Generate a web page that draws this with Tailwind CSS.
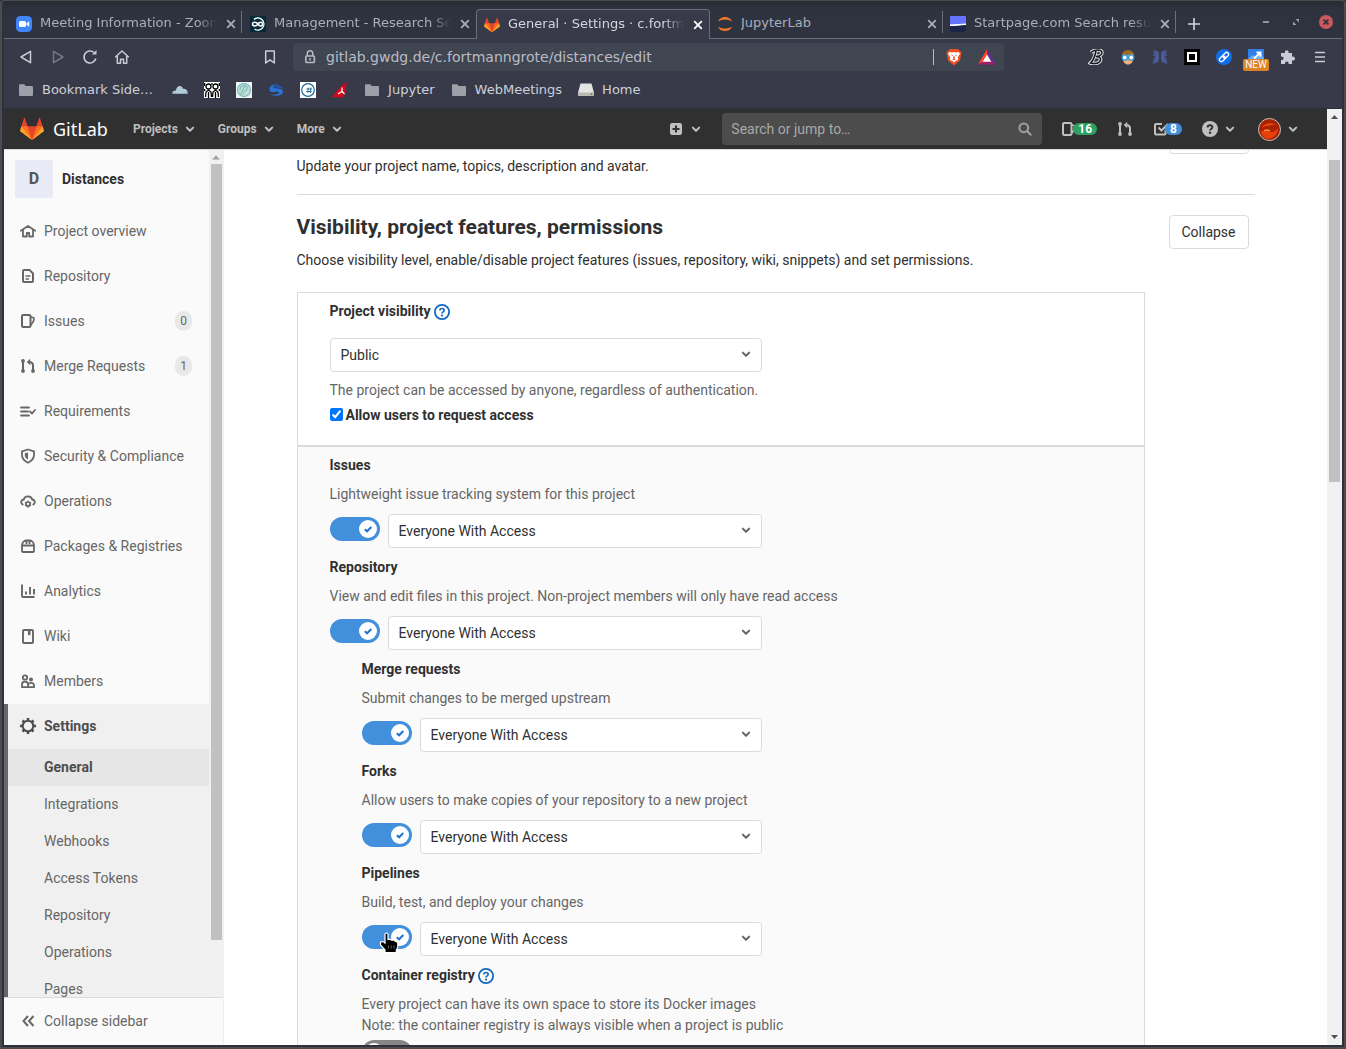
<!DOCTYPE html>
<html lang="en">
<head>
<meta charset="utf-8">
<title>General · Settings · GitLab</title>
<script src="https://cdn.jsdelivr.net/npm/@tailwindcss/browser@4"></script>
</head>
<body class="h-screen overflow-hidden bg-[#2d313d] font-['Roboto',sans-serif] text-sm text-[#303030]">
<svg class="hidden" aria-hidden="true">
  <symbol id="chevron" viewBox="0 0 16 16"><path d="M4.8 6.6 8 9.8l3.2-3.2" fill="none" stroke="currentColor" stroke-width="2" stroke-linecap="round" stroke-linejoin="round"/></symbol>
  <symbol id="close" viewBox="0 0 12 12"><path d="M2.2 2.2l7.6 7.6M9.800 2.200l-7.600 7.600" stroke="currentColor" stroke-width="1.8" fill="none"/></symbol>
  <symbol id="tanuki" viewBox="0 0 36 36">
    <path fill="#e24329" d="M2 14l9.38 9v-9l-4-12.28c-.205-.632-1.176-.632-1.38 0z"/>
    <path fill="#e24329" d="M34 14l-9.38 9v-9l4-12.28c.205-.632 1.176-.632 1.38 0z"/>
    <path fill="#e24329" d="M18 34.38 3 14h30z"/>
    <path fill="#fc6d26" d="M18 34.380 11.380 14H2l4 11z"/>
    <path fill="#fc6d26" d="M18 34.380 24.620 14H34l-4 11z"/>
    <path fill="#fca326" d="M2 14L.1 20.16c-.18.565 0 1.2.5 1.56l17.42 12.66z"/>
    <path fill="#fca326" d="M34 14l1.900 6.160c.18.565 0 1.200-.5 1.560L18 34.380z"/>
  </symbol>
  <symbol id="folder" viewBox="0 0 16 16"><path fill="#9da0a8" d="M1 3.500c0-.8.4-1.300 1.200-1.300h4l1.500 1.800h6c.8 0 1.300.5 1.300 1.300v7.400c0 .8-.5 1.300-1.300 1.300H2.300C1.500 14 1 13.500 1 12.700z"/></symbol>
  <symbol id="issues" viewBox="0 0 16 16"><rect x="2" y="2" width="8.500" height="12" rx="1.200" fill="none" stroke="currentColor" stroke-width="2"/><path d="M10.500 3.800l3.500 1.200-.4 3-3.100 4.400" fill="none" stroke="currentColor" stroke-width="1.700" stroke-linejoin="round"/></symbol>
  <symbol id="merge" viewBox="0 0 16 16"><g fill="none" stroke="currentColor" stroke-width="2"><path d="M3 3v10M13 13V7.500C13 5 11.500 4 9 4"/></g><g fill="currentColor"><circle cx="3" cy="3" r="1.900"/><circle cx="3" cy="13" r="1.900"/><circle cx="13" cy="13" r="1.900"/><path d="M10.200.800v6.400L6.800 4z"/></g></symbol>
  <symbol id="help" viewBox="0 0 16 16"><circle cx="8" cy="8" r="7.100" fill="none" stroke="currentColor" stroke-width="1.800"/><path d="M5.900 6.500C5.900 5.200 6.800 4.500 8 4.500s2.200.8 2.200 1.900C10.200 7.900 8 7.800 8 9.500" fill="none" stroke="currentColor" stroke-width="1.600"/><circle cx="8" cy="11.600" r="1.050" fill="currentColor"/></symbol>
  <symbol id="knob" viewBox="0 0 18 18"><circle cx="9" cy="9" r="9" fill="#fff"/><path d="M5.800 9.200l2.300 2.100 4.200-4.300" fill="none" stroke="#1f75cb" stroke-width="2"/></symbol>
</svg>

<div class="flex h-screen flex-col rounded-t border-2 border-t border-[#4b4c4b] bg-[#2d313d] px-0.5 pb-0.5">

  <!-- Browser tabs -->
  <div class="flex h-[38px] shrink-0 items-stretch bg-linear-to-b from-[#262b35] to-[#2f333f] to-25% font-['DejaVu_Sans',sans-serif] text-[13px] text-[#a9afbb]">
    <div class="flex min-w-0 flex-1 items-end">
      <div class="h-full w-1 border-b border-[#6b6f7a]"></div>
      <div class="flex h-full w-[234px] items-center gap-2 border-b border-[#6b6f7a] pt-2 pl-2">
        <svg class="size-4 shrink-0" viewBox="0 0 16 16"><rect width="16" height="16" rx="4.500" fill="#4087fc"/><rect x="3" y="5" width="7" height="6" rx="1.500" fill="#fff"/><path d="M10.500 7.300L13.200 5.300v5.400L10.500 8.700z" fill="#fff"/></svg>
        <a href="#" class="min-w-0 flex-1 overflow-hidden whitespace-nowrap [mask-image:linear-gradient(to_right,black_calc(100%_-_20px),transparent)]">Meeting Information - Zoom</a>
        <button class="-mr-1" aria-label="Close tab"><svg class="size-3"><use href="#close"/></svg></button>
        <span class="-mt-1 h-[22px] w-px bg-[#6b6f7a]"></span>
      </div>
      <div class="flex h-full w-[234px] items-center gap-2 border-b border-[#6b6f7a] pt-2 pr-[5px] pl-2">
        <svg class="size-4 shrink-0" viewBox="0 0 16 16"><rect width="16" height="16" fill="#022a3a"/><path d="M4 3.500A6 6 0 1 1 4.500 13" fill="none" stroke="#fff" stroke-width="1.400"/><path d="M8 8C6.500 5.500 2.500 5.500 2.500 8s4 2.500 5.500 0 4.500-2.500 4.500 0-3 2.500-4.500 0" fill="none" stroke="#fff" stroke-width="1.500"/></svg>
        <a href="#" class="min-w-0 flex-1 overflow-hidden whitespace-nowrap [mask-image:linear-gradient(to_right,black_calc(100%_-_20px),transparent)]">Management - Research Software</a>
        <button aria-label="Close tab"><svg class="size-3"><use href="#close"/></svg></button>
      </div>
      <div class="flex h-[30px] w-[234px] items-center gap-2 rounded-t border border-b-0 border-[#6b6f7a] bg-[#383a4a] pr-[5px] pl-[7px] text-[#d3d6de]">
        <svg class="size-4 shrink-0"><use href="#tanuki"/></svg>
        <a href="#" class="min-w-0 flex-1 overflow-hidden whitespace-nowrap [mask-image:linear-gradient(to_right,black_calc(100%_-_20px),transparent)]">General · Settings · c.fortmanngrote</a>
        <button class="text-white" aria-label="Close tab"><svg class="size-3"><use href="#close"/></svg></button>
      </div>
      <div class="flex h-full w-[233px] items-center gap-2 border-b border-[#6b6f7a] pt-2 pl-[7px]">
        <svg class="size-4 shrink-0" viewBox="0 0 16 16"><path d="M1 5.500C3-.5 13-.5 15 5.500 11 2.800 5 2.800 1 5.500zM1 10.500c2 6 12 6 14 0-4 2.700-10 2.700-14 0z" fill="#f37726"/></svg>
        <a href="#" class="min-w-0 flex-1 overflow-hidden whitespace-nowrap">JupyterLab</a>
        <button class="-mr-1" aria-label="Close tab"><svg class="size-3"><use href="#close"/></svg></button>
        <span class="-mt-1 h-[22px] w-px bg-[#6b6f7a]"></span>
      </div>
      <div class="flex h-full w-[233px] items-center gap-2 border-b border-[#6b6f7a] pt-2 pl-[7px]">
        <svg class="size-4 shrink-0" viewBox="0 0 16 16"><rect width="16" height="16" rx="1" fill="#6573ff"/><path d="M0 8.500L16 7.500V10H0z" fill="#fff"/><path d="M0 10c6 0 10-.5 16-1v6q0 1-1 1H1q-1 0-1-1z" fill="#1c2447"/></svg>
        <a href="#" class="min-w-0 flex-1 overflow-hidden whitespace-nowrap [mask-image:linear-gradient(to_right,black_calc(100%_-_20px),transparent)]">Startpage.com Search results</a>
        <button class="-mr-1" aria-label="Close tab"><svg class="size-3"><use href="#close"/></svg></button>
        <span class="-mt-1 h-[22px] w-px bg-[#6b6f7a]"></span>
      </div>
      <div class="flex h-full flex-1 items-center border-b border-[#6b6f7a] pt-2 pl-3">
        <button aria-label="New tab" class="text-[#d3d6de]"><svg class="size-3" viewBox="0 0 12 12"><path d="M6 0v12M0 6h12" stroke="currentColor" stroke-width="1.600"/></svg></button>
      </div>
    </div>
    <div class="flex items-center gap-4 border-b border-[#6b6f7a] pt-1 pr-[9px]">
      <button aria-label="Minimize"><svg class="size-3.5" viewBox="0 0 14 14"><path d="M4 7h6" stroke="#9a9fa9" stroke-width="1.800"/></svg></button>
      <button aria-label="Restore"><svg class="size-3.5" viewBox="0 0 14 14"><path d="M6.500 4H10v3.500zM4 6.500V10h3.500z" fill="#9a9fa9"/></svg></button>
      <button aria-label="Close window"><svg class="size-3.5" viewBox="0 0 14 14"><circle cx="7" cy="7" r="7" fill="#cc575d"/><path d="M4.600 4.600l4.800 4.800M9.400 4.600L4.600 9.400" stroke="#2f333f" stroke-width="1.800"/></svg></button>
    </div>
  </div>

  <!-- Address bar -->
  <div class="flex h-[35px] shrink-0 items-center bg-[#383a4a] px-1.5 font-['DejaVu_Sans',sans-serif] text-[#c9ccd4]">
    <div class="flex">
      <button class="grid h-8 w-8 place-items-center" aria-label="Back"><svg class="size-4" viewBox="0 0 16 16"><path d="M12.500 2.300v11.400L3 8z" fill="none" stroke="currentColor" stroke-width="1.500" stroke-linejoin="round"/></svg></button>
      <button class="grid h-8 w-8 place-items-center text-[#747783]" aria-label="Forward"><svg class="size-4" viewBox="0 0 16 16"><path d="M3.500 2.300v11.400L13 8z" fill="none" stroke="currentColor" stroke-width="1.500" stroke-linejoin="round"/></svg></button>
      <button class="grid h-8 w-8 place-items-center" aria-label="Reload"><svg class="size-4" viewBox="0 0 16 16"><path d="M13.800 9.500A6 6 0 1 1 12 3.500" fill="none" stroke="currentColor" stroke-width="1.600"/><path d="M10 5.500h4.500V1z" fill="currentColor"/></svg></button>
      <button class="grid h-8 w-8 place-items-center" aria-label="Home"><svg class="size-4" viewBox="0 0 16 16"><path d="M1.200 8.200L8 2l6.800 6.200M3.300 7v7.200h3.200v-4h3v4h3.200V7" fill="none" stroke="currentColor" stroke-width="1.500" stroke-linejoin="round"/></svg></button>
    </div>
    <button class="mr-[7px] ml-[116px] grid h-8 w-8 place-items-center" aria-label="Bookmark"><svg class="size-4" viewBox="0 0 16 16"><path d="M3.700 2h8.600v12L8 10.800 3.700 14z" fill="none" stroke="currentColor" stroke-width="1.500" stroke-linejoin="round"/></svg></button>
    <div class="flex h-7 min-w-0 flex-1 items-center rounded bg-[#404552] pr-2 pl-[9px]">
      <svg class="size-4 shrink-0" viewBox="0 0 16 16"><rect x="3.800" y="7" width="8.600" height="6.500" rx="1" fill="none" stroke="#b9bcc4" stroke-width="1.600"/><path d="M5.300 7V4.500a2.700 2.700 0 0 1 5.500 0V7M8 9v2.500" fill="none" stroke="#b9bcc4" stroke-width="1.500"/></svg>
      <input aria-label="Address" class="ml-2 min-w-0 flex-1 bg-transparent text-sm text-[#b9bcc4] outline-none" value="gitlab.gwdg.de/c.fortmanngrote/distances/edit">
      <span class="h-4 w-px bg-[#b9bcc4]"></span>
      <button class="ml-3 grid h-5 w-4 place-items-center" aria-label="Shields"><svg class="h-[18px] w-4" viewBox="0 0 16 18"><path d="M4 1h8l2 2 1.500 1-.5 3-1 5.500L8 17.500 2 12.500 1 7 .500 4 2 3z" fill="#f1501f"/><path d="M3 4l3 .6L8 4l2 .6L13 4l.8 2-2 3.500.2 2.500-2.500 1L8 14.500 6.500 13 4 12l.2-2.500L2.200 6z" fill="#fff"/><path d="M4.500 6.500L7 7.300 6.500 8zM11.500 6.500L9 7.300l.5.7zM7 8.500h2L8.600 11 10 12H6l1.400-1z" fill="#f1501f"/></svg></button>
      <button class="ml-4 grid h-5 w-[18px] place-items-center" aria-label="Rewards"><svg class="h-4 w-[18px]" viewBox="0 0 18 16"><path d="M9 0L0 15.500h18z" fill="#662d91"/><path d="M9 0L0 15.500 9 11z" fill="#ff4724"/><path d="M0 15.500h18L9 10z" fill="#9e1f63"/><path d="M9 5.500l4.300 7.200H4.700z" fill="#fff"/></svg></button>
    </div>
    <div class="ml-[76px] flex">
      <button class="grid h-8 w-8 place-items-center" aria-label="Bibliography"><svg class="size-4" viewBox="0 0 16 16"><path d="M3 3.500C6 .500 14 0 14 3.500 14 6 10.500 7.300 8 7.500c3 0 5 1 4.500 3.500C12 14 7 15.500 2.500 14c2.500-2 4.500-7 5.500-12" fill="none" stroke="#d9dbe2" stroke-width="3.600"/><path d="M3 3.500C6 .500 14 0 14 3.500 14 6 10.500 7.300 8 7.500c3 0 5 1 4.500 3.500C12 14 7 15.500 2.500 14c2.500-2 4.500-7 5.500-12" fill="none" stroke="#16171c" stroke-width="1.500"/></svg></button>
      <button class="grid h-8 w-8 place-items-center" aria-label="Reader"><svg class="size-4" viewBox="0 0 16 16"><path d="M2 8C1 4 4 1 8 1s7 3 6 7l-2 6H4z" fill="#9b6a24"/><path d="M3 7l10-2v5c0 3-2 5.500-5 5.500S3 13 3 10z" fill="#f0b078"/><circle cx="4.800" cy="8.500" r="2.600" fill="#fff" stroke="#2f97e0" stroke-width="1.400"/><circle cx="11.200" cy="8.500" r="2.600" fill="#fff" stroke="#2f97e0" stroke-width="1.400"/></svg></button>
      <button class="grid h-8 w-8 place-items-center" aria-label="Butterfly"><svg class="size-4" viewBox="0 0 16 16"><path d="M.5 1L5 2c1.500.5 2 2 2 4v4c0 2-.5 3-2 3.500L.500 15l1-2.500L.500 12 3 10 .500 9.500 4 8 0 6h3L.500 4H3zM15.500 1L11 2c-1.500.5-2 2-2 4v4c0 2 .5 3 2 3.500l4.500 1.500-1-2.500 1-.5L13 10l2.500-.5L12 8l4-2h-3l2.500-2H13z" fill="#4a5c96"/></svg></button>
      <button class="grid h-8 w-8 place-items-center" aria-label="Frame"><svg class="size-4" viewBox="0 0 16 16"><rect width="16" height="16" fill="#000"/><rect x="4" y="4" width="8" height="8" fill="none" stroke="#fff" stroke-width="2"/></svg></button>
      <button class="grid h-8 w-8 place-items-center" aria-label="Copy link"><svg class="size-4" viewBox="0 0 16 16"><circle cx="8" cy="8" r="8" fill="#0f6fe8"/><g fill="none" stroke="#fff" stroke-width="1.300" transform="rotate(-45 8 8)"><rect x="2.300" y="6" width="6.500" height="4" rx="2"/><rect x="7.200" y="6" width="6.500" height="4" rx="2"/></g></svg></button>
      <button class="relative grid h-8 w-8 place-items-center" aria-label="Open in new window"><svg class="size-4" viewBox="0 0 16 16"><rect width="16" height="14" fill="#2f80e8"/><path d="M0 10l5-4 3 3 4-4 4 4v5H0z" fill="#6fb0fa"/><path d="M6 9.500l6-5.500M8.500 3.500h4v4" stroke="#fff" stroke-width="2" fill="none"/></svg><span class="absolute top-[18px] left-[3px] h-3 w-[26px] rounded-xs bg-[#db8325] text-center font-['Roboto'] text-[10px] leading-3 text-white">NEW</span></button>
      <button class="grid h-8 w-8 place-items-center" aria-label="Extensions"><svg class="size-4" viewBox="0 0 16 16"><path d="M1 4h4C4 .300 9.500.300 8.500 4H12v3.500c4-1 4 5 0 4V15H8.500c1-3.500-4-3.500-3.500 0H1v-4c3.500.5 3.500-4 0-3.500z" fill="#c9ccd4"/></svg></button>
      <button class="grid h-8 w-8 place-items-center" aria-label="Menu"><svg class="size-4" viewBox="0 0 16 16"><path d="M3 3.500h10M3 8h10M3 12.500h10" stroke="currentColor" stroke-width="1.500"/></svg></button>
    </div>
  </div>

  <!-- Bookmarks bar -->
  <div class="flex h-[34px] shrink-0 items-center gap-4 bg-[#383a4a] px-3.5 pb-0.5 font-['DejaVu_Sans',sans-serif] text-[13px] text-[#cdd0d8]">
    <a href="#" class="flex items-center gap-2 pr-[3px]"><svg class="size-4"><use href="#folder"/></svg>Bookmark Side…</a>
    <a href="#" aria-label="Cloud"><svg class="size-4" viewBox="0 0 16 16"><path d="M1 12C-1 10 2 8 4 8.500 4 4 10 2 11 7c3-1 6 3 4 5z" fill="#b4cad6"/><path d="M1 12h14.500c.5-1 .3-1.500 0-2C11 11.500 5 11.500.500 10.500z" fill="#8fa9b8"/></svg></a>
    <a href="#" aria-label="Figures"><svg class="size-4" viewBox="0 0 16 16"><rect width="16" height="16" fill="#fff"/><g fill="none" stroke="#000" stroke-width="1.300"><circle cx="4.500" cy="4.500" r="2.500"/><circle cx="11.500" cy="4.500" r="2.500"/><path d="M.7 1v3M15.300 1v3M8 1v2M1.500 15l.5-5 2.500-2L7 10l.5 5M8.500 15l.5-5 2.500-2 2.500 2 .5 5M4.500 10v6M11.500 10v6M.7 7v2M15.300 7v2"/></g></svg></a>
    <a href="#" aria-label="Institute"><svg class="size-4" viewBox="0 0 16 16"><rect width="16" height="16" fill="#eef6f5"/><circle cx="8" cy="8" r="6.800" fill="#c3dfdc"/><g fill="none" stroke="#79b9b3" stroke-width="1.100"><circle cx="8" cy="8" r="6.500"/><path d="M5 13C4 8 8 9 8 5c2-2 4 0 3 2S7 9 7 13M4 8c0-3 2-5 5-5"/></g></svg></a>
    <a href="#" aria-label="Globe"><svg class="size-4" viewBox="0 0 16 16"><path d="M2 9.500C0 4.500 5 1 10.500 2.500 7.500 2.500 5 3.500 5 5c0 2 10 .5 10 4.500 0 5-9 5.500-13 2.500 4 1.500 9 .5 9-1.500C11 8.500 4 11 2 9.500z" fill="#2a72d4"/><path d="M9 3.200c4-.2 6 2 6 4.300C13 5.500 9 6 6 5.500c0-1 1-2 3-2.300z" fill="#1e56b0"/></svg></a>
    <a href="#" aria-label="Hash"><svg class="size-4" viewBox="0 0 16 16"><rect width="16" height="16" fill="#fff"/><circle cx="8" cy="8" r="6.300" fill="none" stroke="#20699c" stroke-width="1.200"/><path d="M8.300 5.500l-.6 5.500M10.900 5.500l-.6 5.500M6.500 7h5.500M6.200 9.500h5.500" stroke="#20699c" stroke-width=".9"/></svg></a>
    <a href="#" aria-label="Sail"><svg class="size-4" viewBox="0 0 16 16"><path d="M15.500 0C9 3 5 9 0 15l11 .5c3-3.500 2-10 4.500-15.500z" fill="#d3061c"/><path d="M10 5.500v4L6 12M10 9.500l2.500 2.500" stroke="#fff" stroke-width="1.300" fill="none"/></svg></a>
    <a href="#" class="flex items-center gap-2"><svg class="size-4"><use href="#folder"/></svg>Jupyter</a>
    <a href="#" class="flex items-center gap-2"><svg class="size-4"><use href="#folder"/></svg>WebMeetings</a>
    <a href="#" class="flex items-center gap-2"><svg class="size-4" viewBox="0 0 16 16"><path d="M2.500 1.500h11L15.800 10v3q0 1-1 1H1.200q-1 0-1-1v-3z" fill="#e4e4e2"/><path d="M.200 10.500h15.600V13q0 1-1 1H1.200q-1 0-1-1z" fill="#b9b9b6"/><circle cx="13.500" cy="12.200" r=".9" fill="#4d9a1c"/></svg>Home</a>
  </div>

  <!-- Page -->
  <div class="flex min-h-0 flex-1 border-t border-[#2d313d] bg-white">
    <div class="flex min-w-0 flex-1 flex-col">
      <header class="flex h-[41px] shrink-0 items-center border-b border-[#dbdbdb] bg-[#303030] pr-[26px] pl-4 text-[#bfbfbf]">
        <a href="#" class="flex w-[113px] items-center gap-[9px] font-['Noto_Sans',sans-serif] text-lg text-white"><svg class="size-6"><use href="#tanuki"/></svg>GitLab</a>
        <nav class="flex gap-5 text-xs font-bold">
          <button class="flex items-center gap-1">Projects<svg class="size-4"><use href="#chevron"/></svg></button>
          <button class="flex items-center gap-1">Groups<svg class="size-4"><use href="#chevron"/></svg></button>
          <button class="flex items-center gap-1">More<svg class="size-4"><use href="#chevron"/></svg></button>
        </nav>
        <button class="ml-auto flex items-center gap-1" aria-label="New"><svg class="size-4" viewBox="0 0 16 16"><rect x="2" y="2" width="12" height="12" rx="2" fill="currentColor"/><path d="M8 4.500v7M4.500 8h7" stroke="#303030" stroke-width="2"/></svg><svg class="size-4"><use href="#chevron"/></svg></button>
        <div class="mr-[19px] ml-[18px] flex h-8 w-80 items-center rounded bg-[#4c4c4c] px-[9px]">
          <input type="search" aria-label="Search" placeholder="Search or jump to…" class="min-w-0 flex-1 bg-transparent outline-none placeholder:text-[#a8a8a8]">
          <svg class="size-4" viewBox="0 0 16 16"><circle cx="6.800" cy="6.800" r="4.400" fill="none" stroke="#a0a0a0" stroke-width="2"/><path d="M10.200 10.200l3.500 3.500" stroke="#a0a0a0" stroke-width="2" stroke-linecap="round"/></svg>
        </div>
        <div class="flex items-center gap-5">
          <a href="#" class="flex items-center" aria-label="Issues"><svg class="size-4"><use href="#issues"/></svg><span class="-ml-1 rounded-full bg-[#2da160] px-[5px] text-xs leading-3 font-bold text-white">16</span></a>
          <a href="#" aria-label="Merge requests"><svg class="size-4"><use href="#merge"/></svg></a>
          <a href="#" class="flex items-center" aria-label="To-Do List"><svg class="size-4" viewBox="0 0 16 16"><path d="M9 3H3q-1 0-1 1v8.500q0 1 1 1h8.500q1 0 1-1V9M5.500 6.500l3 3L15 3" fill="none" stroke="currentColor" stroke-width="2"/></svg><span class="-ml-1 rounded-full bg-[#428fdc] px-[5px] text-xs leading-3 font-bold text-white">8</span></a>
          <button class="flex items-center gap-1" aria-label="Help"><svg class="size-4" viewBox="0 0 16 16"><circle cx="8" cy="8" r="8" fill="currentColor"/><path d="M5.600 6.500C5.600 5.200 6.600 4.300 8 4.300s2.400.8 2.400 2C10.400 8 8 8 8 9.600" fill="none" stroke="#303030" stroke-width="1.900"/><circle cx="8" cy="11.800" r="1.200" fill="#303030"/></svg><svg class="size-4"><use href="#chevron"/></svg></button>
          <button class="flex items-center gap-1" aria-label="Account"><svg class="size-[23px]" viewBox="0 0 23 23"><circle cx="11.500" cy="11.500" r="11" fill="#a82204" stroke="#c9c0bb"/><path d="M4 9c3-4 10-5 14-2-4-1-6 1-9 1S6 9 4 9z" fill="#f0440b"/><path d="M3 14c4-3 8-1 10 0s5-2 7-4c0 6-4 10.500-9 10.500S3.500 18 3 14z" fill="#e8400a"/><path d="M6 13q3-2 6 0" stroke="#ff8a3c" stroke-width="1.500" fill="none"/></svg><svg class="size-4"><use href="#chevron"/></svg></button>
        </div>
      </header>

      <div class="flex min-h-0 flex-1">
        <!-- Sidebar -->
        <aside class="flex w-[220px] shrink-0 flex-col border-r border-[#f0f0f0] bg-[#fafafa] text-[#666]">
          <div class="flex min-h-0 flex-1 overflow-hidden">
            <nav class="min-w-0 flex-1" aria-label="Project">
              <a href="#" class="flex h-[59px] items-center gap-[9px] pb-px pl-[11px] font-bold text-[#303030]"><span class="grid size-[38px] place-items-center rounded-xs bg-[#e8eaf6] text-base text-[#555]">D</span>Distances</a>
              <a href="#" class="flex h-[45px] items-center gap-2 px-4 pb-px"><svg class="size-4" viewBox="0 0 16 16"><path d="M.800 7.700L8 3l7.200 4.700M3 7v6.500h3.800V10h2.400v3.500H13V7" fill="none" stroke="currentColor" stroke-width="1.800" stroke-linejoin="round" stroke-linecap="round"/></svg>Project overview</a>
              <a href="#" class="flex h-[45px] items-center gap-2 px-4 pb-px"><svg class="size-4" viewBox="0 0 16 16"><path d="M3 3q0-1 1-1h5.500L13 5.500V13q0 1-1 1H4q-1 0-1-1z" fill="none" stroke="currentColor" stroke-width="2"/><path d="M5.500 8h5M5.500 11H9" stroke="currentColor" stroke-width="1.600"/></svg>Repository</a>
              <a href="#" class="flex h-[45px] items-center gap-2 pr-[17px] pb-px pl-4"><svg class="size-4"><use href="#issues"/></svg><span class="flex-1">Issues</span><span class="h-5 rounded-full bg-[#e8e8e8] px-[5px] text-xs leading-5">0</span></a>
              <a href="#" class="flex h-[45px] items-center gap-2 pr-[17px] pb-px pl-4"><svg class="size-4"><use href="#merge"/></svg><span class="flex-1">Merge Requests</span><span class="h-5 rounded-full bg-[#e8e8e8] px-[5px] text-xs leading-5">1</span></a>
              <a href="#" class="flex h-[45px] items-center gap-2 px-4 pb-px"><svg class="size-4" viewBox="0 0 16 16"><path d="M1 4.500h8M1 8.500h7M1 12.500h8M10 8.500l2 2 3-3.500" fill="none" stroke="currentColor" stroke-width="1.800" stroke-linecap="round"/></svg>Requirements</a>
              <a href="#" class="flex h-[45px] items-center gap-2 px-4 pb-px"><svg class="size-4" viewBox="0 0 16 16"><path d="M8 1.500l6 1.800V7c0 3.500-2.500 6-6 7.700C4.500 13 2 10.500 2 7V3.300z" fill="none" stroke="currentColor" stroke-width="1.800" stroke-linejoin="round"/><path d="M8 4.500v7C6 10.500 4.800 9 4.800 7V5.200z" fill="currentColor"/></svg>Security &amp; Compliance</a>
              <a href="#" class="flex h-[45px] items-center gap-2 px-4 pb-px"><svg class="size-4" viewBox="0 0 16 16"><path d="M2.700 11.500C.300 10 .800 6.800 3.800 6.500c.8-4.300 7.500-4.300 8.400 0 3 .3 3.500 3.500 1.100 5" fill="none" stroke="currentColor" stroke-width="1.800" stroke-linecap="round"/><circle cx="8" cy="11" r="2" fill="none" stroke="currentColor" stroke-width="1.700"/><path d="M8 7.500v1.200M8 13.300v1.500M5 9.300l1 .6M11 9.300l-1 .6M5 12.700l1-.6M11 12.700l-1-.6" stroke="currentColor" stroke-width="1.500"/></svg>Operations</a>
              <a href="#" class="flex h-[45px] items-center gap-2 px-4 pb-px"><svg class="size-4" viewBox="0 0 16 16"><path d="M2 7.500h12V13q0 1-1 1H3q-1 0-1-1zM2 7.500C2 5 4 2.500 6 2.500h4c2 0 4 2.500 4 5M6.500 3v3M9.500 3v3" fill="none" stroke="currentColor" stroke-width="1.800"/></svg>Packages &amp; Registries</a>
              <a href="#" class="flex h-[45px] items-center gap-2 px-4 pb-px"><svg class="size-4" viewBox="0 0 16 16"><path d="M2 1.500V13q0 1 1 1h11.500M6 8.500v3M10 4v7.500M14 6v5.500" fill="none" stroke="currentColor" stroke-width="1.900"/></svg>Analytics</a>
              <a href="#" class="flex h-[45px] items-center gap-2 px-4 pb-px"><svg class="size-4" viewBox="0 0 16 16"><rect x="3" y="2" width="10" height="13" rx="1" fill="none" stroke="currentColor" stroke-width="1.900"/><path d="M8 2v5.500L9.200 6.700l1.300.8V2z" fill="currentColor"/></svg>Wiki</a>
              <a href="#" class="flex h-[45px] items-center gap-2 px-4 pb-px"><svg class="size-4" viewBox="0 0 16 16"><g fill="none" stroke="currentColor" stroke-width="1.800"><circle cx="5" cy="4.500" r="2.200"/><path d="M2 14.200v-3q0-2.500 3-2.500t3 2.500v3zM8 14.200h6v-1.500c0-3.500-4.500-3.500-5-1.500"/></g><circle cx="11" cy="6.500" r="2" fill="currentColor"/></svg>Members</a>
              <div class="border-l-4 border-[#666] bg-[#f0f0f0]">
                <a href="#" class="flex h-[45px] items-center gap-2 px-3 pb-px font-bold text-[#4d4d4d]"><svg class="size-4" viewBox="0 0 16 16"><circle cx="8" cy="8" r="5.300" fill="none" stroke="currentColor" stroke-width="2"/><path d="M8 0v2.500M8 13.500V16M0 8h2.500M13.500 8H16M2.500 2.500l2 2M11.500 11.500l2 2M13.500 2.500l-2 2M4.500 11.500l-2 2" stroke="currentColor" stroke-width="2.500"/></svg>Settings</a>
                <a href="#" class="flex h-[37px] items-center bg-[#e6e6e6] pb-px pl-9 font-bold text-[#4d4d4d]">General</a>
                <a href="#" class="flex h-[37px] items-center pb-px pl-9">Integrations</a>
                <a href="#" class="flex h-[37px] items-center pb-px pl-9">Webhooks</a>
                <a href="#" class="flex h-[37px] items-center pb-px pl-9">Access Tokens</a>
                <a href="#" class="flex h-[37px] items-center pb-px pl-9">Repository</a>
                <a href="#" class="flex h-[37px] items-center pb-px pl-9">Operations</a>
                <a href="#" class="flex h-[37px] items-center pb-px pl-9">Pages</a>
              </div>
            </nav>
            <div class="flex w-3.5 flex-col items-center bg-[#f1f1f1] pt-1">
              <svg class="h-2.5 w-2 shrink-0" viewBox="0 0 8 10"><path d="M0 5.500h8l-4-4z" fill="#a0a0a0"/></svg>
              <div class="h-[92%] w-[11px] bg-[#c1c1c1]"></div>
            </div>
          </div>
          <button class="flex h-12 shrink-0 items-center gap-2 border-t border-[#dbdbdb] px-4 pb-px"><svg class="size-4" viewBox="0 0 16 16"><path d="M8 3L3.500 8 8 13M13.500 3L9 8l4.500 5" fill="none" stroke="currentColor" stroke-width="2"/></svg>Collapse sidebar</button>
        </aside>

        <!-- Settings -->
        <main class="min-w-0 flex-1 overflow-hidden">
          <div class="mx-auto -mt-[30px] w-full max-w-[990px] px-4 leading-[21px]">
            <section class="border-b border-[#dbdbdb] pb-[17px]">
              <div class="flex justify-end pr-1.5"><button aria-label="Expand" class="h-[34px] w-20 rounded border border-[#dbdbdb]"></button></div>
              <p class="mt-0.5">Update your project name, topics, description and avatar.</p>
            </section>
            <section class="pt-5">
              <div class="flex items-start justify-between pr-1.5">
                <div>
                  <h2 class="text-[21px] leading-6 font-bold">Visibility, project features, permissions</h2>
                  <p class="mt-[11px]">Choose visibility level, enable/disable project features (issues, repository, wiki, snippets) and set permissions.</p>
                </div>
                <button class="h-[34px] w-20 shrink-0 rounded border border-[#dbdbdb]">Collapse</button>
              </div>
              <div class="mt-[21px] mr-[110px] border border-[#dbdbdb]">
                <div class="px-8 pt-2 pb-[19px]">
                  <div class="flex items-center gap-[3px]"><label for="visibility" class="font-bold">Project visibility</label><a href="#" aria-label="Visibility help" class="text-[#1068bf]"><svg class="size-4"><use href="#help"/></svg></a></div>
                  <div class="relative mt-4 w-[432px] max-w-full">
                    <select id="visibility" class="h-[34px] w-full appearance-none rounded border border-[#dbdbdb] bg-white px-2.5"><option>Public</option></select>
                    <svg class="pointer-events-none absolute top-2 right-2 size-4 text-[#666]"><use href="#chevron"/></svg>
                  </div>
                  <p class="mt-2 text-[#666]">The project can be accessed by anyone, regardless of authentication.</p>
                  <label class="mt-1 flex items-center gap-[3px] font-bold"><input type="checkbox" checked class="mb-0.5 size-[13px] accent-[#0075ff]">Allow users to request access</label>
                </div>
                <div class="flex flex-col gap-[9px] border-t-2 border-[#dbdbdb] bg-[#fafafa] px-8 pt-2 pb-8">
                  <div>
                    <h3 class="font-bold">Issues</h3>
                    <p class="mt-2 text-[#666]">Lightweight issue tracking system for this project</p>
                    <div class="mt-[9px] flex w-[432px] max-w-full items-start gap-2">
                      <label class="relative mt-[3px] h-6 w-[50px] shrink-0"><input type="checkbox" role="switch" checked aria-label="Issues" class="h-6 w-[50px] appearance-none rounded-full bg-[#428fdc]"><svg class="pointer-events-none absolute top-[3px] right-[3px] size-[18px]"><use href="#knob"/></svg></label>
                      <div class="relative flex-1"><select aria-label="Issues access" class="h-[34px] w-full appearance-none rounded border border-[#dbdbdb] bg-white px-2.5"><option>Everyone With Access</option></select><svg class="pointer-events-none absolute top-2 right-2 size-4 text-[#666]"><use href="#chevron"/></svg></div>
                    </div>
                  </div>
                  <div>
                    <h3 class="font-bold">Repository</h3>
                    <p class="mt-2 text-[#666]">View and edit files in this project. Non-project members will only have read access</p>
                    <div class="mt-[9px] flex w-[432px] max-w-full items-start gap-2">
                      <label class="relative mt-[3px] h-6 w-[50px] shrink-0"><input type="checkbox" role="switch" checked aria-label="Repository" class="h-6 w-[50px] appearance-none rounded-full bg-[#428fdc]"><svg class="pointer-events-none absolute top-[3px] right-[3px] size-[18px]"><use href="#knob"/></svg></label>
                      <div class="relative flex-1"><select aria-label="Repository access" class="h-[34px] w-full appearance-none rounded border border-[#dbdbdb] bg-white px-2.5"><option>Everyone With Access</option></select><svg class="pointer-events-none absolute top-2 right-2 size-4 text-[#666]"><use href="#chevron"/></svg></div>
                    </div>
                  </div>
                  <div class="pl-8">
                    <h3 class="font-bold">Merge requests</h3>
                    <p class="mt-2 text-[#666]">Submit changes to be merged upstream</p>
                    <div class="mt-[9px] flex w-[400px] max-w-full items-start gap-2">
                      <label class="relative mt-[3px] h-6 w-[50px] shrink-0"><input type="checkbox" role="switch" checked aria-label="Merge requests" class="h-6 w-[50px] appearance-none rounded-full bg-[#428fdc]"><svg class="pointer-events-none absolute top-[3px] right-[3px] size-[18px]"><use href="#knob"/></svg></label>
                      <div class="relative flex-1"><select aria-label="Merge requests access" class="h-[34px] w-full appearance-none rounded border border-[#dbdbdb] bg-white px-2.5"><option>Everyone With Access</option></select><svg class="pointer-events-none absolute top-2 right-2 size-4 text-[#666]"><use href="#chevron"/></svg></div>
                    </div>
                  </div>
                  <div class="pl-8">
                    <h3 class="font-bold">Forks</h3>
                    <p class="mt-2 text-[#666]">Allow users to make copies of your repository to a new project</p>
                    <div class="mt-[9px] flex w-[400px] max-w-full items-start gap-2">
                      <label class="relative mt-[3px] h-6 w-[50px] shrink-0"><input type="checkbox" role="switch" checked aria-label="Forks" class="h-6 w-[50px] appearance-none rounded-full bg-[#428fdc]"><svg class="pointer-events-none absolute top-[3px] right-[3px] size-[18px]"><use href="#knob"/></svg></label>
                      <div class="relative flex-1"><select aria-label="Forks access" class="h-[34px] w-full appearance-none rounded border border-[#dbdbdb] bg-white px-2.5"><option>Everyone With Access</option></select><svg class="pointer-events-none absolute top-2 right-2 size-4 text-[#666]"><use href="#chevron"/></svg></div>
                    </div>
                  </div>
                  <div class="pl-8">
                    <h3 class="font-bold">Pipelines</h3>
                    <p class="mt-2 text-[#666]">Build, test, and deploy your changes</p>
                    <div class="mt-[9px] flex w-[400px] max-w-full items-start gap-2">
                      <label class="relative mt-[3px] h-6 w-[50px] shrink-0"><input type="checkbox" role="switch" checked aria-label="Pipelines" class="h-6 w-[50px] appearance-none rounded-full bg-[#428fdc]"><svg class="pointer-events-none absolute top-[3px] right-[3px] size-[18px]"><use href="#knob"/></svg>
                        <svg class="pointer-events-none absolute top-[7px] left-[17px] h-[22px] w-5" viewBox="0 0 20 22"><path d="M6 2q1.500-2 3 0v5.500l2-.3 1.500 1 2.500-.2 1.500 1.300q2.300.2 2.300 2V15.500l-1.500 2.500v2.500H6V18L1.500 13V10q2.500-1 4.500 1z" fill="#000" stroke="#fff" stroke-width="1.200"/><path d="M9.500 13.500v3M12.200 13.500v3M15 13.500v3" stroke="#777" stroke-width=".8"/></svg>
                      </label>
                      <div class="relative flex-1"><select aria-label="Pipelines access" class="h-[34px] w-full appearance-none rounded border border-[#dbdbdb] bg-white px-2.5"><option>Everyone With Access</option></select><svg class="pointer-events-none absolute top-2 right-2 size-4 text-[#666]"><use href="#chevron"/></svg></div>
                    </div>
                  </div>
                  <div class="pl-8">
                    <div class="flex items-center gap-[3px]"><h3 class="font-bold">Container registry</h3><a href="#" aria-label="Registry help" class="text-[#1068bf]"><svg class="size-4"><use href="#help"/></svg></a></div>
                    <p class="mt-2 text-[#666]">Every project can have its own space to store its Docker images<br>Note: the container registry is always visible when a project is public</p>
                    <label class="relative mt-1 block h-6 w-[50px]"><input type="checkbox" role="switch" aria-label="Container registry" class="h-6 w-[50px] appearance-none rounded-full bg-[#868686]"><span class="pointer-events-none absolute top-[3px] left-[3px] size-[18px] rounded-full bg-white"></span></label>
                  </div>
                </div>
              </div>
            </section>
          </div>
        </main>
      </div>
    </div>

    <!-- Page scrollbar -->
    <div class="flex w-[15px] shrink-0 flex-col items-center bg-[#f1f1f1] py-1">
      <svg class="h-2 w-[7px]" viewBox="0 0 7 8"><path d="M0 6h7L3.500 2z" fill="#505050"/></svg>
      <div class="mt-[39px] h-[322px] w-[11px] bg-[#c1c1c1]"></div>
      <svg class="mt-auto h-2 w-[7px]" viewBox="0 0 7 8"><path d="M0 2h7L3.500 6z" fill="#505050"/></svg>
    </div>
  </div>
</div>
</body>
</html>
